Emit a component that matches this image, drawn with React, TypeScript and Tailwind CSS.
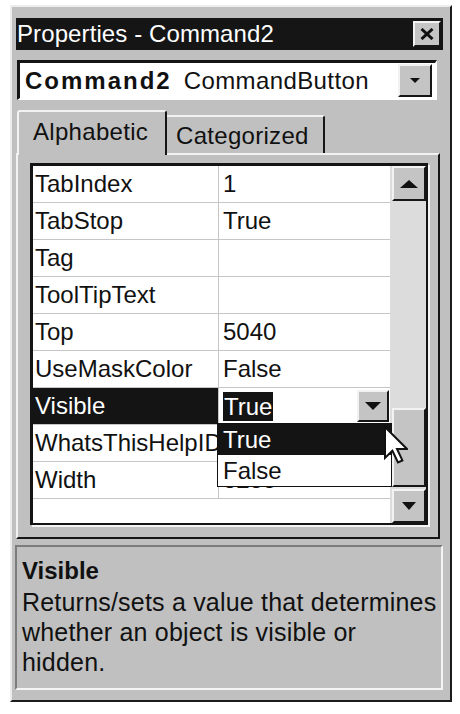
import React from 'react';

type Prop = { name: string; value: string };

const rows: Prop[] = [
  { name: 'TabIndex', value: '1' },
  { name: 'TabStop', value: 'True' },
  { name: 'Tag', value: '' },
  { name: 'ToolTipText', value: '' },
  { name: 'Top', value: '5040' },
  { name: 'UseMaskColor', value: 'False' },
  { name: 'Visible', value: 'True' },
  { name: 'WhatsThisHelpID', value: '0' },
  { name: 'Width', value: '3255' },
];

// raised 3d button look, classic windows
const raised =
  'bg-[#c4c4c4] border-t-2 border-l-2 border-r-2 border-b-2 border-t-[#f2f2f2] border-l-[#f2f2f2] border-r-[#161616] border-b-[#161616]';

const Tri = ({ up = false, w = 16, h = 8 }: { up?: boolean; w?: number; h?: number }) => (
  <svg width={w} height={h} viewBox={`0 0 ${w} ${h}`}>
    <polygon points={up ? `${w / 2},0 ${w},${h} 0,${h}` : `0,0 ${w},0 ${w / 2},${h}`} fill="#111" />
  </svg>
);

const Cursor = () => (
  <svg width="24" height="38" viewBox="0 0 12 19">
    <path
      d="M0.5 0.5 L0.5 16 L4.2 12.4 L7 18.2 L9.2 17.2 L6.5 11.5 L11.5 11.5 Z"
      fill="#fff"
      stroke="#111"
      strokeWidth="1"
      strokeLinejoin="miter"
    />
  </svg>
);

const PropRow = ({ p }: { p: Prop }) => {
  const active = p.name === 'Visible';
  return (
    <div className="flex h-[37px] border-b border-[#c6c6c6]">
      <div
        className={`w-[186px] shrink-0 border-r border-[#c6c6c6] overflow-hidden whitespace-nowrap pl-[2px] flex items-center ${
          active ? 'bg-[#141414] text-white' : 'text-[#111]'
        }`}
      >
        {p.name}
      </div>
      <div className="flex-1 flex items-center pl-[4px] text-[#111]">
        {active ? (
          <>
            <span className="bg-[#141414] text-white px-[1px] leading-[29px]">{p.value}</span>
            <div className={`ml-auto mr-[1px] w-[32px] h-[32px] flex items-center justify-center ${raised}`}>
              <Tri w={16} h={8} />
            </div>
          </>
        ) : (
          p.value
        )}
      </div>
    </div>
  );
};

export default function App() {
  return (
    <div className="w-[460px] h-[714px] bg-white pt-[5px] pl-[10px] overflow-hidden font-['Liberation_Sans',Arial,sans-serif]">
      <div className="w-[442px] h-[697px] bg-[#c0c0c0] border-2 border-t-[#ececec] border-l-[#ececec] border-r-[#1c1c1c] border-b-[#1c1c1c] flex flex-col">
        {/* title bar */}
        <div className="mt-[11px] ml-[4px] w-[427px] h-[32px] bg-[#151515] flex items-center justify-between pl-[1px] pr-[2px]">
          <span className="text-white text-[24px] tracking-[0.1px] leading-none">Properties - Command2</span>
          <div className={`w-[28px] h-[26px] flex items-center justify-center ${raised}`}>
            <svg width="14" height="12" viewBox="0 0 14 12">
              <path d="M1.5 1 L12.5 11 M12.5 1 L1.5 11" stroke="#111" strokeWidth="3" />
            </svg>
          </div>
        </div>

        {/* object combo */}
        <div className="mt-[10px] ml-[5px] w-[420px] h-[40px] bg-white border-t-[3px] border-l-[3px] border-r-2 border-b-2 border-t-[#151515] border-l-[#151515] border-r-white border-b-white flex items-center pl-[5px] pr-[3px] text-[24px] text-[#111]">
          <span className="font-bold tracking-[2px]">Command2</span>
          <span className="ml-[12px] tracking-[0.4px]">CommandButton</span>
          <div className={`ml-auto w-[34px] h-[33px] flex items-center justify-center ${raised}`}>
            <Tri w={10} h={5} />
          </div>
        </div>

        {/* tabs */}
        <div className="mt-[8px] ml-[5px] h-[45px] flex items-end text-[24px] tracking-[0.3px] text-[#111]">
          <div className="relative z-10 mb-[-2px] w-[150px] h-[45px] bg-[#c0c0c0] rounded-t-[3px] border-t-2 border-l-2 border-r-2 border-t-[#f2f2f2] border-l-[#f2f2f2] border-r-[#161616] flex items-center pl-[14px] pb-[4px]">
            Alphabetic
          </div>
          <div className="w-[158px] h-[38px] bg-[#c0c0c0] rounded-tr-[3px] border-t-2 border-r-2 border-t-[#f2f2f2] border-r-[#161616] flex items-center pl-[9px] pt-[1px]">
            Categorized
          </div>
        </div>

        {/* tab panel */}
        <div className="ml-[4px] w-[424px] h-[386px] border-t-2 border-l-2 border-r-2 border-b-2 border-t-[#f2f2f2] border-l-[#f2f2f2] border-r-[#161616] border-b-[#161616] pt-[8px] pl-[12px]">
          <div className="w-[398px] h-[362px] bg-white border-t-[3px] border-l-[3px] border-r-2 border-b-2 border-[#141414] shadow-[2px_2px_0_#f4f4f4] flex text-[24px]">
            <div className="relative w-[357px]">
              {rows.map((p) => (
                <PropRow key={p.name} p={p} />
              ))}

              {/* open dropdown list */}
              <div className="absolute z-10 left-[184px] top-[257px] w-[175px] h-[64px] bg-white border border-[#111] flex flex-col text-[#111]">
                <div className="h-[31px] bg-[#141414] text-white flex items-center pl-[5px]">True</div>
                <div className="h-[31px] flex items-center pl-[5px]">False</div>
              </div>

              <div className="absolute z-20 left-[351px] top-[260px]">
                <Cursor />
              </div>
            </div>

            {/* scrollbar */}
            <div className="w-[36px] bg-[#dcdcdc] flex flex-col pl-[2px]">
              <div className={`h-[35px] flex items-center justify-center ${raised}`}>
                <Tri up w={18} h={8} />
              </div>
              <div className="h-[207px]" />
              <div className={`h-[79px] ${raised}`} />
              <div className="h-[2px]" />
              <div className={`h-[34px] flex items-center justify-center ${raised}`}>
                <Tri w={14} h={8} />
              </div>
            </div>
          </div>
        </div>

        {/* description pane */}
        <div className="mt-[6px] ml-[3px] w-[428px] h-[145px] border-t-2 border-l-2 border-r-2 border-b-2 border-t-[#7c7c7c] border-l-[#7c7c7c] border-r-[#f4f4f4] border-b-[#f4f4f4] pl-[5px] pt-[7px] text-[25px] tracking-[0.2px] text-[#111]">
          <div className="font-bold text-[24px] tracking-normal leading-[33px]">Visible</div>
          <div className="leading-[30px]">
            Returns/sets a value that determines
            <br />
            whether an object is visible or
            <br />
            hidden.
          </div>
        </div>
      </div>
    </div>
  );
}
